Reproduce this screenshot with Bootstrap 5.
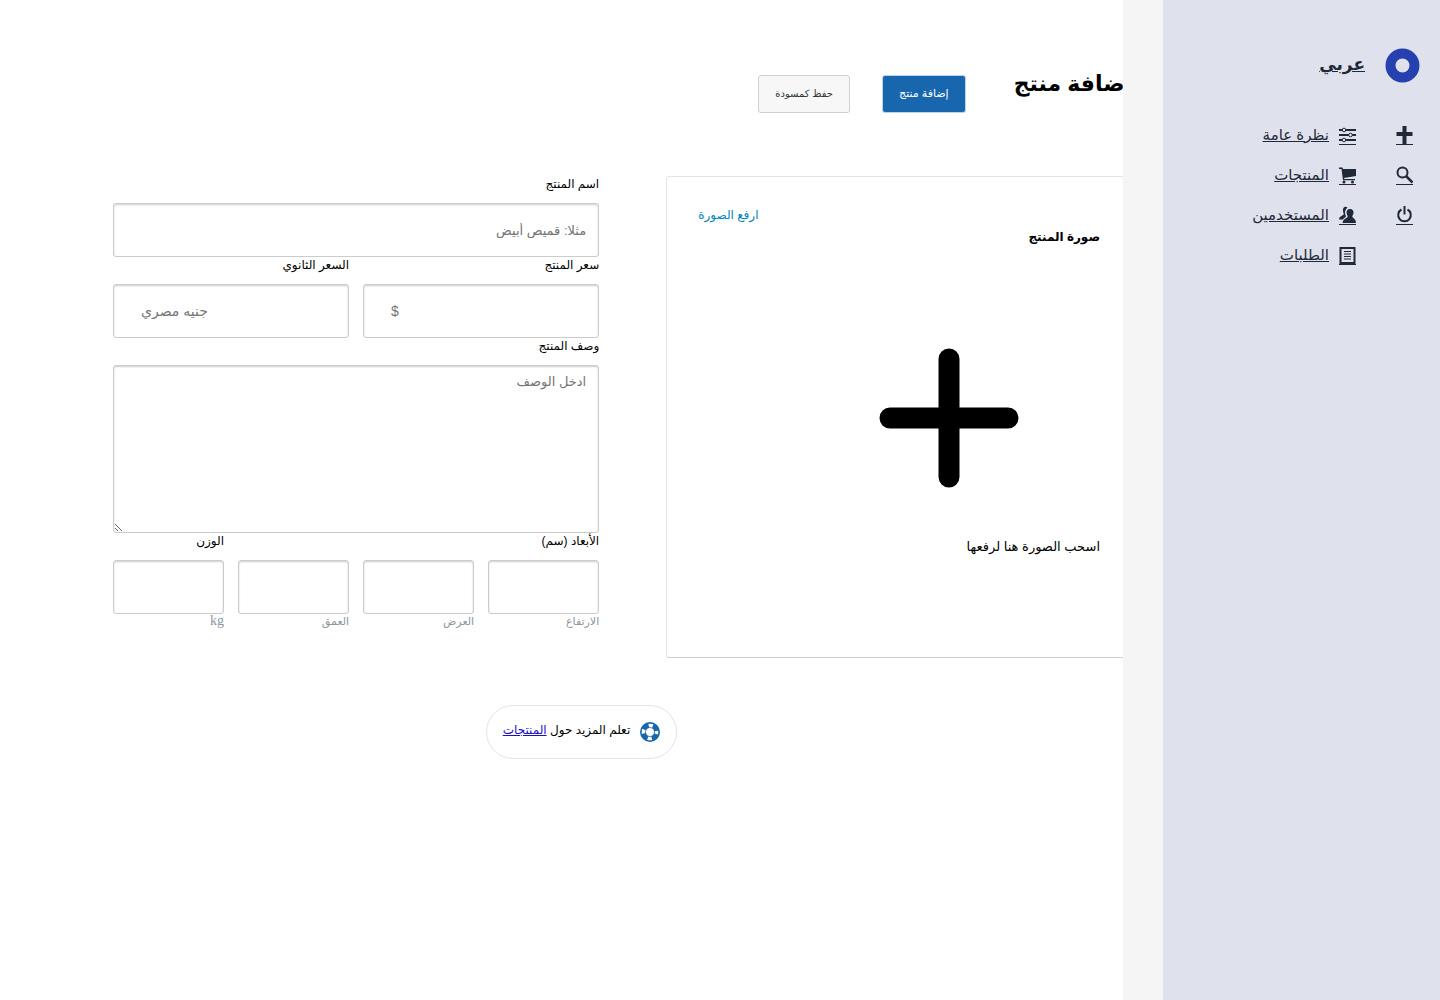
<!DOCTYPE html>
<html lang="ar" dir="rtl">
  <head>
    <meta charset="utf-8" />
    <meta name="viewport" content="width=device-width, initial-scale=1" />
    <title>إضافة منتج</title>
    <link
      href="https://cdn.jsdelivr.net/npm/bootstrap@5.3.3/dist/css/bootstrap.min.css"
      rel="stylesheet"
    />
    <style>
      body {
        font-family: "Liberation Sans", "DejaVu Sans", sans-serif;
        font-size: 12px;
        color: #000;
      }

      /* sidebar */
      .sidebar {
        width: 277px;
        padding: 48px 20px;
        background: #dfe2ed;
      }

      .sidebar a {
        color: #1f2937;
      }

      .brand-link {
        gap: 20px;
        margin-bottom: 40px;
        font-size: 17px;
        font-weight: bold;
        line-height: 34px;
      }

      .side-columns {
        gap: 40px;
        padding-right: 7px;
      }

      .side-list {
        gap: 16px;
      }

      .side-list a {
        gap: 10px;
        height: 24px;
        font-size: 15px;
      }

      .side-icon {
        display: block;
        width: 17px;
        height: 19px;
        border-bottom: 1px solid #1f2937;
      }

      /* main area, its first 40px run under the grey strip */
      .page-main {
        padding: 68px 31px;
      }

      .edge-strip {
        top: 0;
        right: 0;
        width: 40px;
        background: #f5f5f5;
      }

      .page-head {
        gap: 32px;
        margin-bottom: 63px;
        padding-top: 7px;
      }

      .page-title {
        margin: 0 0 0 16px;
        font-size: 22px;
        font-weight: bold;
        line-height: 18px;
        white-space: nowrap;
      }

      .head-btn {
        height: 38px;
        padding: 0 16px 2px;
        border: 1px solid #ccd0d4;
        border-radius: 3px;
        background: #f7f7f7;
        color: #32373c;
        font-size: 10px;
      }

      .head-btn-main {
        background: #1866ae;
        border-color: #bdd3e8;
        color: #fff;
        font-size: 11px;
      }

      .product-grid {
        display: grid;
        grid-template-columns: 11fr 15fr;
      }

      .image-card {
        padding: 31px 31px 101px;
        border: 1px solid #e5e5e5;
        border-bottom-color: #ccd0d4;
        border-radius: 3px;
      }

      .image-card h2 {
        margin: 20px 0 0;
        font-size: 12px;
        font-weight: bold;
        line-height: 18px;
      }

      .upload-link {
        color: #0085ba;
        font-size: 12px;
        line-height: 14px;
      }

      .drop-text {
        font-size: 13px;
        line-height: 18px;
      }

      .drop-icon {
        width: 302px;
        height: 292px;
      }

      .product-form {
        padding: 0 67px 0 82px;
      }

      .product-form label {
        display: block;
        margin-bottom: 10px;
        line-height: 17px;
      }

      .field-row {
        display: grid;
        grid-template-columns: repeat(4, 1fr);
        column-gap: 14px;
      }

      .field-half {
        grid-column: span 2;
      }

      .field-box {
        height: 54px;
        padding: 6px 12px;
        border: 1px solid #ccc;
        border-radius: 3px;
        box-shadow: inset 0 1px 2px #0003;
        font-size: 13px;
      }

      .field-box::placeholder {
        color: #757575;
      }

      .field-money {
        padding: 6px 27px;
        text-align: left;
        font-size: 14px;
      }

      .field-text {
        height: 168px;
        resize: vertical;
      }

      .field-note {
        color: #8d96a0;
        font-family: "Liberation Serif", "DejaVu Sans", serif;
        font-size: 11px;
        line-height: 14px;
      }

      .field-unit {
        font-size: 14px;
      }

      .help-pill {
        gap: 10px;
        height: 54px;
        margin-top: 47px;
        padding: 0 16px;
        border: 1px solid #e2e4e7;
        border-radius: 27px;
      }

      .help-pill a {
        color: #1a0dcc;
      }
    </style>
  </head>
  <body>
    <div class="d-flex min-vh-100">
      <aside class="sidebar flex-shrink-0">
        <a href="#" class="brand-link d-flex">
          <svg width="35" height="35" viewBox="0 0 35 35" aria-hidden="true">
            <circle cx="17.5" cy="17.5" r="12" fill="none" stroke="#2740b0" stroke-width="10" />
          </svg>
          عربي
        </a>

        <div class="side-columns d-flex">
          <nav class="side-list d-flex flex-column" aria-label="أدوات">
            <a href="#" class="d-flex align-items-center" aria-label="إضافة">
              <svg class="side-icon" viewBox="0 0 17 18"><path d="M8.5 0v18M.5 8h16" stroke="#1f2937" stroke-width="4" /></svg>
            </a>
            <a href="#" class="d-flex align-items-center" aria-label="بحث">
              <svg class="side-icon" viewBox="0 0 17 18" fill="none" stroke="#1f2937"><circle cx="6.5" cy="6.5" r="5" stroke-width="2" /><path d="M10 10l6.500 6.500" stroke-width="2.500" /></svg>
            </a>
            <a href="#" class="d-flex align-items-center" aria-label="خروج">
              <svg class="side-icon" viewBox="0 0 17 18" fill="none" stroke="#1f2937" stroke-width="2"><path d="M5.500 3.500a6.300 6.300 0 1 0 6 0M8.500 0v8.500" /></svg>
            </a>
          </nav>

          <nav class="side-list d-flex flex-column" aria-label="القائمة">
            <a href="#" class="d-flex align-items-center">
              <svg class="side-icon" viewBox="0 0 17 18" fill="#dfe2ed" stroke="#1f2937"><path d="M0 4h17M0 9h17M0 14h17" stroke-width="2" /><circle cx="5" cy="4" r="1.8" /><circle cx="11.500" cy="9" r="1.8" /><circle cx="5" cy="14" r="1.8" /></svg>
              نظرة عامة
            </a>
            <a href="#" class="d-flex align-items-center">
              <svg class="side-icon" viewBox="0 0 17 18" fill="#1f2937"><path d="M0 1.500h3.500L4 3h13v7L5 12l.3 1H16v1.200H4L2.500 3H0z" /><circle cx="5" cy="16" r="1.500" /><circle cx="13.500" cy="16" r="1.500" /></svg>
              المنتجات
            </a>
            <a href="#" class="d-flex align-items-center">
              <svg class="side-icon" viewBox="0 0 17 18" fill="#1f2937"><path d="M8.500 1.500C6-.3 3.500 1.500 4 5c.3 2 1 2.500.5 3.500S0 10.500 0 13.500h4c.5-1.500 3-2.200 3-3.200C5.500 7.500 5.500 4 8.500 1.500z" /><path d="M11 3C8.500 3 7.200 4.800 7.600 7.300c.2 1.700 1.100 2.200 1.100 3.200 0 1.500-4.700 2-5.200 6.500H17c0-4.500-3.700-5-3.700-6.500 0-1 1-1.500 1.200-3.200C14.900 4.800 13.500 3 11 3z" /></svg>
              المستخدمين
            </a>
            <a href="#" class="d-flex align-items-center">
              <svg class="side-icon" viewBox="0 0 17 18" fill="none" stroke="#1f2937"><rect x="1.500" y="2" width="14" height="15" stroke-width="2" /><path d="M5 5.500h7M5 8h7M5 10.500h7M5 13h7" /></svg>
              الطلبات
            </a>
          </nav>
        </div>
      </aside>

      <main class="page-main position-relative flex-grow-1 overflow-hidden">
        <header class="page-head d-flex">
          <h1 class="page-title">إضافة منتج</h1>
          <button type="submit" form="productForm" class="head-btn head-btn-main">إضافة منتج</button>
          <button type="button" class="head-btn">حفظ كمسودة</button>
        </header>

        <div class="product-grid">
          <section class="image-card">
            <div class="d-flex justify-content-between align-items-start">
              <h2>صورة المنتج</h2>
              <a href="#" class="upload-link text-decoration-none">ارفع الصورة</a>
            </div>
            <svg class="drop-icon d-block" viewBox="0 0 302 292" aria-hidden="true">
              <path d="M151 113v118M92 172h118" stroke="#000" stroke-width="21" stroke-linecap="round" />
            </svg>
            <p class="drop-text mb-0">اسحب الصورة هنا لرفعها</p>
          </section>

          <form class="product-form" id="productForm">
            <label for="productName">اسم المنتج</label>
            <input type="text" id="productName" class="field-box d-block w-100" placeholder="مثلا: قميص أبيض" />

            <div class="field-row">
              <div class="field-half">
                <label for="price">سعر المنتج</label>
                <input type="text" id="price" class="field-box field-money d-block w-100" placeholder="$" />
              </div>
              <div class="field-half">
                <label for="secondPrice">السعر الثانوي</label>
                <input type="text" id="secondPrice" class="field-box field-money d-block w-100" placeholder="جنيه مصري" />
              </div>
            </div>

            <label for="description">وصف المنتج</label>
            <textarea id="description" class="field-box field-text d-block w-100" placeholder="ادخل الوصف"></textarea>

            <div class="field-row">
              <label for="sizeHeight" class="field-half">الأبعاد (سم)</label>
              <span></span>
              <label for="weight">الوزن</label>
              <div>
                <input type="text" id="sizeHeight" class="field-box d-block w-100" aria-describedby="noteHeight" />
                <div class="field-note" id="noteHeight">الارتفاع</div>
              </div>
              <div>
                <input type="text" id="sizeWidth" class="field-box d-block w-100" aria-labelledby="noteWidth" />
                <div class="field-note" id="noteWidth">العرض</div>
              </div>
              <div>
                <input type="text" id="sizeDepth" class="field-box d-block w-100" aria-labelledby="noteDepth" />
                <div class="field-note" id="noteDepth">العمق</div>
              </div>
              <div>
                <input type="text" id="weight" class="field-box d-block w-100" aria-describedby="noteWeight" />
                <div class="field-note field-unit" id="noteWeight">kg</div>
              </div>
            </div>
          </form>
        </div>

        <div class="d-flex justify-content-center">
          <div class="help-pill d-flex align-items-center">
            <svg width="20" height="20" viewBox="0 0 20 20" fill="none" aria-hidden="true">
              <circle cx="10" cy="10" r="7" stroke="#1866ae" stroke-width="6" />
              <circle cx="10" cy="10" r="6.500" stroke="#fff" stroke-width="3.500" stroke-dasharray="4.200 6.010" stroke-dashoffset="2.100" />
            </svg>
            <span class="pb-1">تعلم المزيد حول <a href="#">المنتجات</a></span>
          </div>
        </div>

        <div class="edge-strip position-absolute h-100"></div>
      </main>
    </div>

    <script src="https://cdn.jsdelivr.net/npm/bootstrap@5.3.3/dist/js/bootstrap.bundle.min.js"></script>
  </body>
</html>
